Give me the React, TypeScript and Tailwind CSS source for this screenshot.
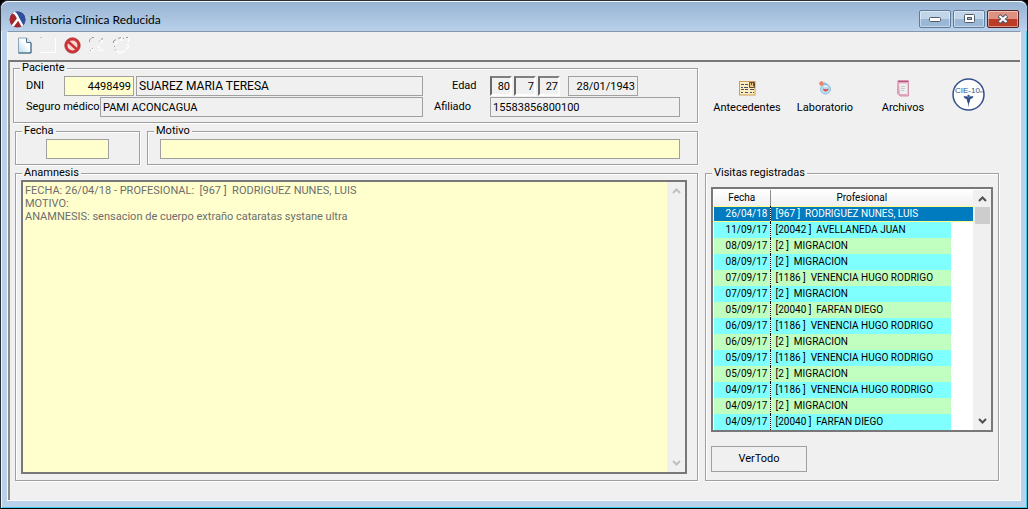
import { useState } from "react";
import type { ReactNode } from "react";

const VISITS = [
  { date: "26/04/18", professional: "[967 ]  RODRIGUEZ NUNES, LUIS" },
  { date: "11/09/17", professional: "[20042 ]  AVELLANEDA JUAN" },
  { date: "08/09/17", professional: "[2 ]  MIGRACION" },
  { date: "08/09/17", professional: "[2 ]  MIGRACION" },
  { date: "07/09/17", professional: "[1186 ]  VENENCIA HUGO RODRIGO" },
  { date: "07/09/17", professional: "[2 ]  MIGRACION" },
  { date: "05/09/17", professional: "[20040 ]  FARFAN DIEGO" },
  { date: "06/09/17", professional: "[1186 ]  VENENCIA HUGO RODRIGO" },
  { date: "06/09/17", professional: "[2 ]  MIGRACION" },
  { date: "05/09/17", professional: "[1186 ]  VENENCIA HUGO RODRIGO" },
  { date: "05/09/17", professional: "[2 ]  MIGRACION" },
  { date: "04/09/17", professional: "[1186 ]  VENENCIA HUGO RODRIGO" },
  { date: "04/09/17", professional: "[2 ]  MIGRACION" },
  { date: "04/09/17", professional: "[20040 ]  FARFAN DIEGO" },
];

const NOTES = `FECHA: 26/04/18 - PROFESIONAL:  [967 ]  RODRIGUEZ NUNES, LUIS
MOTIVO:
ANAMNESIS: sensacion de cuerpo extraño cataratas systane ultra`;

const FIELD = "h-5 min-w-0 border border-[#a0a0a0] px-0.5 outline-none";
const AGE =
  "h-5 w-[22px] border-2 border-t-[#808080] border-l-[#696969] border-r-white border-b-white px-0 text-right outline-none";

function Group({
  title,
  className = "",
  children,
}: {
  title: string;
  className?: string;
  children: ReactNode;
}) {
  return (
    <fieldset
      className={`min-w-0 border border-[#a0a0a0] shadow-[1px_1px_0_#fff,inset_1px_1px_0_#fff] ${className}`}
    >
      <legend className="ml-1.5 bg-[#f0f0f0] px-0.5 leading-3">{title}</legend>
      {children}
    </fieldset>
  );
}

function Chevron({ down = false, color }: { down?: boolean; color: string }) {
  return (
    <svg width="9" height="6" viewBox="0 0 9 6" aria-hidden="true">
      <path
        d={down ? "M1 1l3.5 3.5L8 1" : "M1 5l3.5-3.5L8 5"}
        fill="none"
        stroke={color}
        strokeWidth="2"
      />
    </svg>
  );
}

function AppLogo() {
  return (
    <svg width="17" height="17" viewBox="0 0 17 17" aria-hidden="true">
      <defs>
        <clipPath id="disc">
          <circle cx="8.5" cy="8.5" r="8" />
        </clipPath>
      </defs>
      <g clipPath="url(#disc)">
        <rect width="17" height="17" fill="#a3262f" />
        <path d="M4 0h13v17h-3L9 7z" fill="#2d4f9c" />
        <path
          d="M3.500 1.500C6.500 1.500 8 4.500 9 7l5 9M9 8L3 16"
          fill="none"
          stroke="#fff"
          strokeWidth="2.400"
        />
      </g>
    </svg>
  );
}

function NewIcon() {
  return (
    <svg width="14" height="17" viewBox="0 0 14 17" aria-hidden="true">
      <defs>
        <linearGradient id="sheet" x1="0" y1="1" x2="1" y2="0">
          <stop offset="0" stopColor="#b4dbec" />
          <stop offset="0.6" stopColor="#fff" />
        </linearGradient>
      </defs>
      <path d="M.5 1h8L13 5.500V16H.5z" fill="url(#sheet)" stroke="#8ba6ba" />
      <path d="M8.500 1v4.500H13" fill="#d5e8f2" stroke="#4c7392" />
      <path d="M.5 16H13V6" fill="none" stroke="#36617f" />
    </svg>
  );
}

function CancelIcon() {
  return (
    <svg width="17" height="17" viewBox="0 0 17 17" aria-hidden="true">
      <circle cx="8.5" cy="8.5" r="6.300" fill="#f6d9d7" stroke="#cf3234" strokeWidth="2.600" />
      <path d="M4.300 4.800l8.400 7.400" stroke="#cf3234" strokeWidth="2.600" />
      <circle cx="8.5" cy="8.5" r="7.700" fill="none" stroke="#a61c22" strokeWidth="0.800" />
    </svg>
  );
}

function RecordsIcon() {
  return (
    <svg width="17" height="15" viewBox="0 0 17 15" aria-hidden="true">
      <rect x="0.5" y="0.5" width="15.500" height="13.500" fill="#fdeec0" stroke="#cf9c55" />
      <path
        d="M2 3.500h3M6 3.500h3M2 6.500h2M5 6.500h4M2 8.500h3M6 8.500h3M2 11.500h2M6 11.500h3M11 8.500h4M11 11.500h2M14 11.500h1"
        stroke="#4b4e6b"
      />
      <path d="M10.500 1.500h5v5h-5z" fill="#e8c983" stroke="#694c31" />
      <path d="M12.500 1v3M14.500 2v3" stroke="#694c31" />
    </svg>
  );
}

function LabIcon() {
  return (
    <svg width="12" height="14" viewBox="0 0 12 14" aria-hidden="true">
      <circle cx="6.5" cy="8" r="5" fill="#b8dcf0" stroke="#8fbfe0" />
      <path d="M4 7.500c1.500 1 4 1 5.500 0 0 4-5.500 4-5.500 0z" fill="#dc5148" />
      <path d="M5 5.500h3" stroke="#fff" />
      <circle cx="2.500" cy="2.500" r="2.300" fill="#ed8464" />
      <path d="M5 2l3 1.500" stroke="#8cbbe0" strokeWidth="1.500" />
    </svg>
  );
}

function FilesIcon() {
  return (
    <svg width="13" height="17" viewBox="0 0 13 17" aria-hidden="true">
      <path d="M1 .5h10.500V16H3L.5 13.500z" fill="#e3a9c0" stroke="#d591ae" />
      <path d="M2 3.500h8V14H3z" fill="#eef0ef" />
      <path d="M4 6.500h4M4 8.500h4M4 10.500h3" stroke="#c2cac8" />
      <path d="M10.500 3v12" stroke="#f0c7d8" />
      <path d="M1 1.500h10" stroke="#b4557e" />
    </svg>
  );
}

function CieLogo() {
  return (
    <svg width="33" height="33" viewBox="0 0 33 33" aria-hidden="true">
      <circle cx="16.500" cy="16.500" r="15.500" fill="#fff" stroke="#34508c" strokeWidth="1.500" />
      <text x="3" y="15" fontSize="8" fontFamily="Liberation Sans, sans-serif" fill="#34508c">
        CIE-10<tspan fontSize="4">es</tspan>
      </text>
      <path d="M11.500 18.500c2-.5 4 0 5 1 1-1 3-1.500 5-1-.8 1.800-2 2.500-3.500 2.500h-3c-1.500 0-2.700-.7-3.500-2.500z" fill="#34508c" />
      <path d="M14.500 20h4l-.5 3-1 2.500-.5 4-.5-4-1-2.500z" fill="#34508c" />
      <circle cx="16.500" cy="18" r="1.200" fill="#34508c" />
    </svg>
  );
}

const WINDOW_BUTTON =
  "flex h-[18px] w-8 items-center justify-center rounded-xs border shadow-[inset_0_0_0_1px_rgba(255,255,255,0.45)]";

export default function App() {
  const [selected, setSelected] = useState(0);

  return (
    <div className="h-screen overflow-hidden bg-black font-[Roboto,sans-serif] text-[11px] text-black">
      <div className="flex h-full flex-col rounded-t-lg border border-[#2b2e36] border-b-black bg-[#b9d1ea] px-1.5 pb-[7px] shadow-[inset_1px_1px_0_#e8f4fd,inset_-1px_-1px_0_#3ccbe8]">
        {/* Title bar */}
        <header className="-mx-1.5 flex h-[30px] shrink-0 items-center gap-1 rounded-t-lg border-t border-white/80 bg-linear-to-b from-[#98b4d3] to-[#b9d1ea] px-2 pt-1.5">
          <AppLogo />
          <h1 className="flex-1 font-[Lato,sans-serif] text-xs leading-4">Historia Clínica Reducida</h1>
          <div className="-mt-0.5 flex gap-0.5">
            <button
              aria-label="Minimizar"
              className={`${WINDOW_BUTTON} border-[#5f7a9b] bg-linear-to-b from-[#c1d5ea] from-50% to-[#9ab7d5] to-50%`}
            >
              <svg width="12" height="6" viewBox="0 0 12 6">
                <rect x="0.5" y="1.500" width="11" height="4" rx="1" fill="#fff" stroke="#535b67" />
              </svg>
            </button>
            <button
              aria-label="Maximizar"
              className={`${WINDOW_BUTTON} border-[#5f7a9b] bg-linear-to-b from-[#c1d5ea] from-50% to-[#9ab7d5] to-50%`}
            >
              <svg width="11" height="9" viewBox="0 0 11 9">
                <rect x="0.5" y="0.5" width="10" height="8" rx="1" fill="#fff" stroke="#535b67" />
                <rect x="3.500" y="3.500" width="4" height="2" fill="#9ab7d5" stroke="#535b67" />
              </svg>
            </button>
            <button
              aria-label="Cerrar"
              className={`${WINDOW_BUTTON} border-[#5b2226] bg-linear-to-b from-[#dd9180] from-50% to-[#bd3c27] to-50%`}
            >
              <svg width="12" height="10" viewBox="0 0 12 10">
                <path d="M2 1.500l8 7M10 1.500l-8 7" stroke="#535666" strokeWidth="4" />
                <path d="M2.500 2l7 6M9.500 2l-7 6" stroke="#fff" strokeWidth="2.200" />
              </svg>
            </button>
          </div>
        </header>

        <div className="flex min-h-0 flex-1 flex-col border border-[#f7f9fb] border-t-[#8797ab] bg-[#f0f0f0]">
          {/* Toolbar */}
          <div className="flex h-7 shrink-0 items-center pb-0.5 pl-2.5">
            <button aria-label="Nuevo" className="mr-2 flex">
              <NewIcon />
            </button>
            <button aria-label="Guardar" disabled className="mr-2 flex">
              <svg width="16" height="16" viewBox="0 0 16 16">
                <path d="M0 15.500h15.500V1" fill="none" stroke="#fff" />
                <path d="M0 .5h2" stroke="#c8c8c8" />
              </svg>
            </button>
            <button aria-label="Cancelar" className="mr-2 flex">
              <CancelIcon />
            </button>
            <button aria-label="Eliminar" disabled className="mr-2 flex">
              <svg width="16" height="16" viewBox="0 0 16 16" fill="none">
                <path d="M.5 5V3L3 .5h2M1 13.500h1M3 11.500h1M10 4.500l1-1M12 2.500l2-1" stroke="#9a9a9a" />
                <path d="M2 14.500l3-3M9 9.500l2 1M12 12l2 2M11 5.500l3-2M9 13.500h2" stroke="#fff" strokeWidth="1.500" />
              </svg>
            </button>
            <button aria-label="Actualizar" disabled className="flex">
              <svg width="17" height="17" viewBox="0 0 17 17" fill="none">
                <path d="M.5 6V4L3 2.500M5 1.500l3-1M10 1.500h1M13 .5h2M1 9.500h1M2 12.500l1 1" stroke="#9a9a9a" />
                <path d="M15.500 2v3M14.500 7l1 3-2 2M12 13l-3 2.500H6L3.500 14M2 7l3-3M7 3h3" stroke="#fff" strokeWidth="1.500" />
              </svg>
            </button>
          </div>

          <main className="flex min-h-0 flex-1 gap-[7px] border-t-2 border-l-2 border-t-[#787878] border-l-[#8c8c8c] pr-[21px] pb-[19px] pl-[3px]">
            <div className="flex min-w-0 flex-1 flex-col gap-0.5">
              <Group title="Paciente" className="shrink-0">
                <div className="grid grid-cols-[1fr_246px] gap-px pt-0.5 pr-[17px] pb-[5px] pl-3">
                  <div className="flex items-center">
                    <label htmlFor="dni" className="w-[38px] shrink-0">DNI</label>
                    <input id="dni" readOnly value="4498499" className={`${FIELD} mr-0.5 w-[70px] bg-[#ffffcd] text-right`} />
                    <input aria-label="Nombre" readOnly value="SUAREZ MARIA TERESA" className={`${FIELD} mr-2.5 flex-1 text-xs`} />
                  </div>
                  <div className="flex items-center">
                    <label htmlFor="age" className="w-14 shrink-0 pl-[18px]">Edad</label>
                    <div className="flex gap-0.5">
                      <input id="age" readOnly value="80" className={AGE} />
                      <input aria-label="Meses" readOnly value="7" className={AGE} />
                      <input aria-label="Días" readOnly value="27" className={AGE} />
                    </div>
                    <input aria-label="Fecha de nacimiento" readOnly value="28/01/1943" className={`${FIELD} ml-2 w-[70px] text-right`} />
                  </div>
                  <div className="flex items-center">
                    <label htmlFor="insurance" className="w-[74px] shrink-0 whitespace-nowrap">Seguro médico</label>
                    <input id="insurance" readOnly value="PAMI ACONCAGUA" className={`${FIELD} mr-2.5 flex-1`} />
                  </div>
                  <div className="flex items-center">
                    <label htmlFor="member" className="w-14 shrink-0">Afiliado</label>
                    <input id="member" readOnly value="15583856800100" className={`${FIELD} flex-1`} />
                  </div>
                </div>
              </Group>

              <div className="flex shrink-0 gap-[7px] pl-0.5">
                <Group title="Fecha" className="w-[125px] shrink-0">
                  <div className="px-[30px] pt-0.5 pb-[5px]">
                    <input aria-label="Fecha" className={`${FIELD} block w-full bg-[#ffffcd]`} />
                  </div>
                </Group>
                <Group title="Motivo" className="flex-1">
                  <div className="pt-0.5 pr-[17px] pb-[5px] pl-3">
                    <input aria-label="Motivo" className={`${FIELD} block w-full bg-[#ffffcd]`} />
                  </div>
                </Group>
              </div>

              <Group title="Anamnesis" className="ml-0.5 flex min-h-0 flex-1 flex-col">
                <div className="mt-px mr-2.5 mb-1.5 ml-[5px] flex min-h-0 flex-1 border-2 border-[#787878]">
                  <textarea
                    aria-label="Anamnesis"
                    readOnly
                    value={NOTES}
                    className="block flex-1 resize-none overflow-hidden bg-[#ffffcd] px-0.5 pt-0.5 leading-[13px] text-[#6d6d6d] outline-none"
                  />
                  <div className="flex w-[18px] flex-col items-center justify-between py-1.5">
                    <Chevron color="#bfbfbf" />
                    <Chevron down color="#bfbfbf" />
                  </div>
                </div>
              </Group>
            </div>

            <div className="flex w-[294px] shrink-0 flex-col">
              {/* Shortcuts */}
              <nav className="flex h-[105px] shrink-0 items-start pt-4 pl-[3px]" aria-label="Accesos">
                <button className="flex w-[78px] flex-col items-center">
                  <span className="flex h-5 items-center"><RecordsIcon /></span>
                  <span className="leading-5">Antecedentes</span>
                </button>
                <button className="flex w-[78px] flex-col items-center">
                  <span className="flex h-5 items-center"><LabIcon /></span>
                  <span className="leading-5">Laboratorio</span>
                </button>
                <button className="flex w-[78px] flex-col items-center">
                  <span className="flex h-5 items-center"><FilesIcon /></span>
                  <span className="leading-5">Archivos</span>
                </button>
                <button aria-label="CIE-10" className="ml-2.5">
                  <CieLogo />
                </button>
              </nav>

              <Group title="Visitas registradas" className="flex min-h-0 flex-1 flex-col">
                <div className="mx-[5px] mt-2 flex min-h-0 flex-1 overflow-hidden border-2 border-[#787878] bg-white pt-px pl-px">
                  <table className="h-fit flex-1 table-fixed border-collapse text-[10px] leading-4">
                    <colgroup>
                      <col className="w-14" />
                      <col />
                      <col className="w-[22px]" />
                    </colgroup>
                    <thead>
                      <tr className="h-4 bg-linear-to-b from-white to-[#f0f0f0]">
                        <th className="border-r border-[#8c8c8c] p-0 font-normal">Fecha</th>
                        <th colSpan={2} className="p-0 pr-5 font-normal">Profesional</th>
                      </tr>
                    </thead>
                    <tbody>
                      {VISITS.map((visit, i) => {
                        const active = i === selected;
                        const fill = active
                          ? "bg-[#007bc0] text-white shadow-[inset_0_1px_0_#ffff80,inset_0_-1px_0_#ffff80]"
                          : i % 2
                            ? "bg-[#80ffff]"
                            : "bg-[#c0ffc0]";
                        return (
                          <tr key={i} onClick={() => setSelected(i)} className="h-4">
                            <td className={`border-r border-dotted border-black p-0 pr-0.5 text-right ${fill}`}>
                              {visit.date}
                            </td>
                            <td className={`overflow-hidden p-0 pl-[5px] whitespace-pre ${fill}`}>{visit.professional}</td>
                            <td className={`p-0 ${active ? fill : "bg-white"}`} />
                          </tr>
                        );
                      })}
                    </tbody>
                  </table>
                  <div className="flex w-[18px] shrink-0 flex-col items-center bg-[#f0f0f0] pb-1.5">
                    <span className="flex h-[17px] items-center"><Chevron color="#505050" /></span>
                    <span className="h-[17px] w-[15px] bg-[#cdcdcd]" />
                    <span className="mt-auto flex"><Chevron down color="#505050" /></span>
                  </div>
                </div>
                <div className="px-[5px] pt-3.5 pb-2">
                  <button className="block h-[26px] w-24 border border-[#a0a0a0]">VerTodo</button>
                </div>
              </Group>
            </div>
          </main>
        </div>
      </div>
    </div>
  );
}
